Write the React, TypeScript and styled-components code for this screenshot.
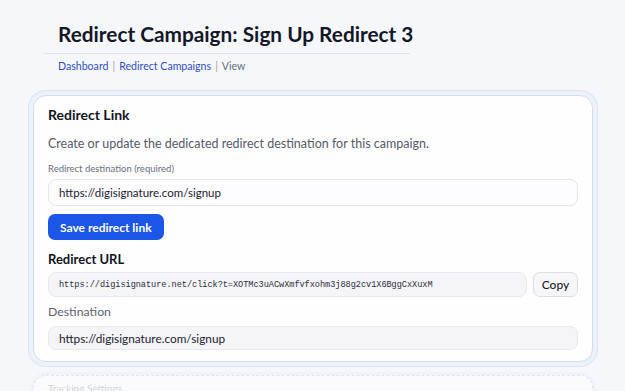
import React from "react";
import styled, { createGlobalStyle } from "styled-components";

const Global = createGlobalStyle`
  html, body { margin: 0; padding: 0; }
  body {
    background: #f6f7fb;
    font-family: Lato, "Noto Sans", sans-serif;
    color: #151a2c;
    width: 625px;
    height: 391px;
    overflow: hidden;
  }
  * { box-sizing: border-box; }
`;

const Page = styled.div`
  display: flex;
  flex-direction: column;
  padding-top: 21px;
`;

const Header = styled.header`
  margin-left: 44px;
  width: 366px;
  padding-left: 14px;
  padding-bottom: 7px;
  border-bottom: 1px solid #dfe3ee;
`;

const Title = styled.h1`
  margin: 0;
  font-size: 20.8px;
  line-height: 25px;
  font-weight: 700;
  color: #131829;
  white-space: nowrap;
`;

const Crumbs = styled.nav`
  display: flex;
  align-items: center;
  gap: 4px;
  margin: 4px 0 0 58px;
  font-size: 10.6px;
  line-height: 16px;
`;

const Crumb = styled.a<{ $current?: boolean }>`
  color: ${(p) => (p.$current ? "#6a6e78" : "#2f4fbf")};
  text-decoration: none;
`;

const Sep = styled.span`
  color: #9a9ea8;
`;

const Card = styled.section`
  margin: 21px 0 0 33px;
  width: 560px;
  background: #fefdff;
  border: 1px solid #d3dcef;
  border-radius: 13px;
  box-shadow: 0 0 0 4px #edf1fa, 0 0 0 5px #dbe4f6;
  padding: 10px 14px 11px 14px;
  display: flex;
  flex-direction: column;
`;

const CardTitle = styled.h2`
  margin: 0;
  font-size: 14px;
  line-height: 18px;
  font-weight: 700;
  color: #111522;
`;

const Desc = styled.p`
  margin: 12px 0 0;
  font-size: 12.5px;
  line-height: 16px;
  color: #565b68;
`;

const Label = styled.label`
  margin-top: 10px;
  font-size: 9.5px;
  line-height: 14px;
  color: #6a6f7c;
`;

const Field = styled.div<{ $filled?: boolean; $h: number; $size: number }>`
  height: ${(p) => p.$h}px;
  display: flex;
  align-items: center;
  padding: 0 10px;
  border: 1px solid ${(p) => (p.$filled ? "#e8e9f0" : "#e2e5ee")};
  background: ${(p) => (p.$filled ? "#f5f5f9" : "#fdfcff")};
  border-radius: 8px;
  font-size: ${(p) => p.$size}px;
  color: #1c2030;
  flex: 1;
  min-width: 0;
  white-space: nowrap;
  overflow: hidden;
`;

const Mono = styled.span`
  font-family: "Liberation Mono", "DejaVu Sans Mono", monospace;
  font-size: 8.6px;
  letter-spacing: -0.04px;
  color: #2a2e3a;
`;

const Primary = styled.button`
  align-self: flex-start;
  margin-top: 8px;
  height: 26px;
  padding: 0 12px;
  border: none;
  border-radius: 7px;
  background: #1b56e6;
  color: #fff;
  font-family: inherit;
  font-size: 12px;
  font-weight: 700;
`;

const Section = styled.h3`
  margin: 11px 0 0;
  font-size: 13px;
  line-height: 16px;
  font-weight: 700;
  color: #111522;
`;

const Row = styled.div`
  display: flex;
  gap: 6px;
  margin-top: 5px;
`;

const Ghost = styled.button`
  width: 45px;
  height: 25px;
  border: 1px solid #dcdee6;
  background: #f7f7fa;
  border-radius: 7px;
  font-family: inherit;
  font-size: 12px;
  font-weight: 500;
  color: #1a1e2a;
  padding: 0;
`;

const SubLabel = styled.div`
  margin-top: 7px;
  font-size: 12.3px;
  line-height: 16px;
  color: #5f6470;
`;

const FieldWrap = styled.div<{ $top: number }>`
  display: flex;
  margin-top: ${(p) => p.$top}px;
`;

const NextCard = styled.section`
  margin: 13px 0 0 33px;
  width: 560px;
  height: 60px;
  border: 1px dashed #e1e5ef;
  border-radius: 13px;
  background: #fbfbfe;
  box-shadow: 0 0 0 3px #f1f3fa;
  padding: 6px 14px;
`;

const Faint = styled.div`
  font-size: 10px;
  line-height: 12px;
  color: #d2d4dc;
`;

export default function App() {
  return (
    <Page>
      <Global />
      <Header>
        <Title>Redirect Campaign: Sign Up Redirect 3</Title>
      </Header>
      <Crumbs>
        <Crumb href="#">Dashboard</Crumb>
        <Sep>|</Sep>
        <Crumb href="#">Redirect Campaigns</Crumb>
        <Sep>|</Sep>
        <Crumb $current>View</Crumb>
      </Crumbs>
      <Card>
        <CardTitle>Redirect Link</CardTitle>
        <Desc>Create or update the dedicated redirect destination for this campaign.</Desc>
        <Label>Redirect destination (required)</Label>
        <FieldWrap $top={3}>
          <Field $h={27} $size={11.5}>https://digisignature.com/signup</Field>
        </FieldWrap>
        <Primary>Save redirect link</Primary>
        <Section>Redirect URL</Section>
        <Row>
          <Field $filled $h={25} $size={11.5}>
            <Mono>https://digisignature.net/click?t=XOTMc3uACwXmfvfxohm3j88g2cv1X6BggCxXuxM</Mono>
          </Field>
          <Ghost>Copy</Ghost>
        </Row>
        <SubLabel>Destination</SubLabel>
        <FieldWrap $top={6}>
          <Field $filled $h={24} $size={11.8}>https://digisignature.com/signup</Field>
        </FieldWrap>
      </Card>
      <NextCard>
        <Faint>Tracking Settings</Faint>
      </NextCard>
    </Page>
  );
}
